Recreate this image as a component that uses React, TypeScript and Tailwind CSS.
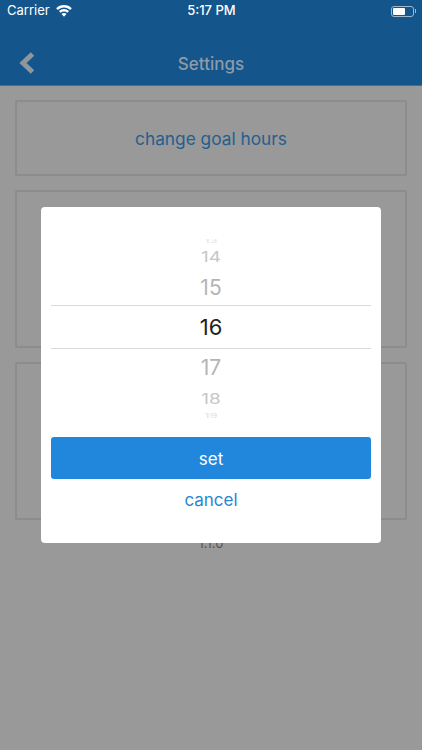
import React from "react";

const font = "font-['Inter','Liberation_Sans',sans-serif]";

const Card = ({ className, children }: { className: string; children?: React.ReactNode }) => (
  <div className={`flex items-center justify-center border-2 border-[#8c8c8c] rounded-[2px] ${className}`}>
    {children}
  </div>
);

const Wifi = () => (
  <svg width="16" height="12" viewBox="0 0 16 12" fill="#fff" className="ml-[6px]">
    <path d="M8 0C5 0 2.300 1.200.2 3.200l1.600 1.700C3.400 3.300 5.600 2.400 8 2.400s4.600.9 6.200 2.500l1.600-1.700C13.700 1.200 11 0 8 0z" />
    <path d="M8 4.100c-1.900 0-3.700.7-5 2l1.600 1.700C5.500 7 6.700 6.500 8 6.500s2.500.5 3.400 1.300L13 6.100c-1.300-1.300-3.100-2-5-2z" />
    <path d="M8 8.100c-1 0-1.900.4-2.500 1L8 11.800l2.500-2.700c-.6-.6-1.500-1-2.500-1z" />
  </svg>
);

const Battery = () => (
  <div className="flex items-center">
    <div className="w-[23px] h-[11px] rounded-[3px] border border-[#9fb6cb] p-[1px]">
      <div className="w-[12px] h-full rounded-[1px] bg-white" />
    </div>
    <div className="w-[1px] h-[4px] bg-[#9fb6cb] ml-[1px]" />
  </div>
);

const Row = ({ className, label }: { className: string; label: string }) => (
  <div className={`absolute left-0 right-0 text-center leading-none ${className}`}>{label}</div>
);

export default function App() {
  return (
    <div className={`relative w-[422px] h-[750px] overflow-hidden bg-[#999999] ${font}`}>
      <div className="h-[86px] bg-[#14558b] border-b border-[#3f6f97]">
        <div className="flex items-center justify-between h-[22px] pl-[7px] pr-[6px] text-white">
          <div className="flex items-center w-[120px] text-[13px]">
            Carrier
            <Wifi />
          </div>
          <div className="text-[13px] font-medium">5:17 PM</div>
          <div className="flex justify-end w-[120px]">
            <Battery />
          </div>
        </div>
        <div className="relative flex items-center justify-center h-[63px] pt-[23px] text-[#8e9ba8] text-[17px] font-medium">
          <svg width="16" height="22" viewBox="0 0 16 22" className="absolute left-[19px] top-[30px]">
            <path d="M13.500 2 4 11l9.500 9" fill="none" stroke="#8f979e" strokeWidth="5" />
          </svg>
          Settings
        </div>
      </div>

      <div className="flex flex-col gap-[14px] pt-[14px] px-[15px]">
        <Card className="h-[76px] text-[17.300px] pt-[2px] text-[#235f90]">change goal hours</Card>
        <Card className="h-[158px]" />
        <Card className="h-[158px]" />
        <div className="text-center text-[13px] text-[#555555] mt-[3px] leading-none">1.1.0</div>
      </div>

      <div className="absolute left-[41px] top-[207px] w-[340px] h-[336px] bg-white rounded-[4px] px-[10px]">
        <div className="relative h-[209px] mt-[32px] overflow-hidden text-[#b5b5b5] text-[21px]">
          <Row className="top-[-5px] text-[13px] scale-y-50 text-[#e2e2e2]" label="13" />
          <Row className="top-[9px] text-[19px] scale-y-75 text-[#c6c6c6]" label="14" />
          <Row className="top-[38px]" label="15" />
          <div className="absolute left-0 right-0 top-[66px] h-[44px] border-y border-[#d9d9d9]" />
          <Row className="top-[77px] text-[#222222] text-[22px]" label="16" />
          <Row className="top-[118px]" label="17" />
          <Row className="top-[151px] text-[19px] scale-y-75 text-[#c6c6c6]" label="18" />
          <Row className="top-[170px] text-[13px] scale-y-50 text-[#e2e2e2]" label="19" />
        </div>
        <div className="flex items-center justify-center h-[42px] -mt-[11px] pt-[3px] rounded-[3px] bg-[#2187dd] text-white text-[17px]">
          set
        </div>
        <div className="text-center text-[#2a86cf] text-[17px] mt-[10px] leading-[22px]">cancel</div>
      </div>
    </div>
  );
}
